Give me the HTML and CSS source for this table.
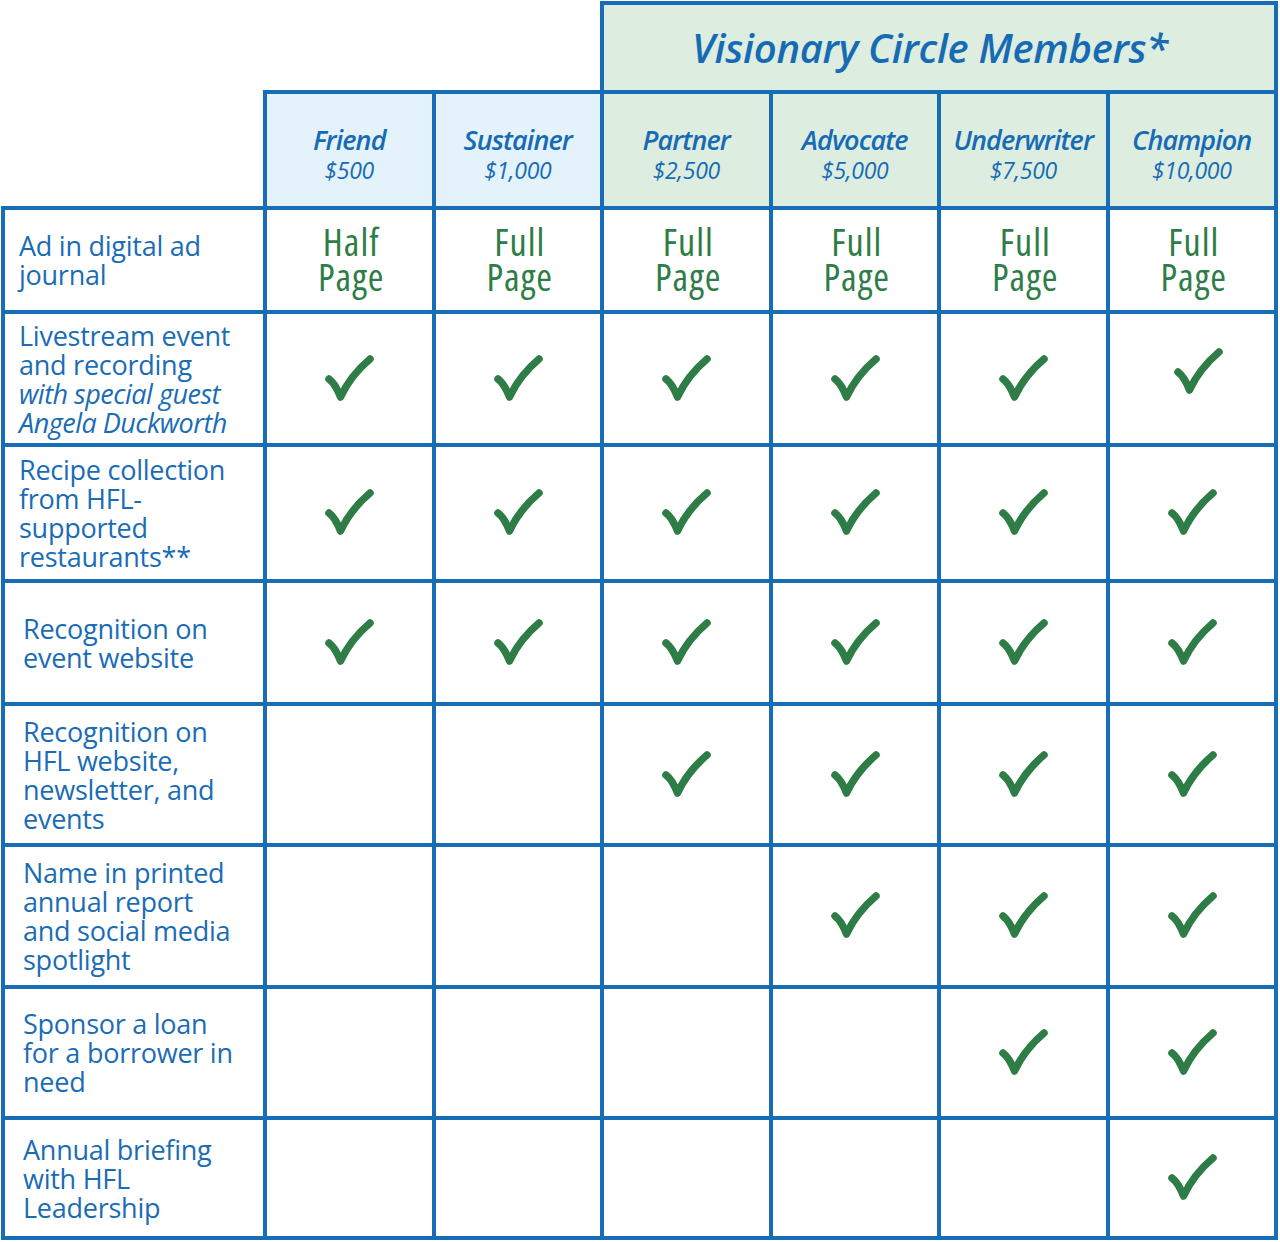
FILE: index.html
```html
<!DOCTYPE html>
<html lang="en">
<head>
<meta charset="utf-8">
<title>Visionary Circle Members</title>
<link rel="stylesheet" href="styles.css">
</head>
<body>
<div class="chart">
  <div class="blank blank-top"></div>
  <div class="blank blank-left"></div>
  <div class="vision">Visionary Circle Members*</div>

  <div class="tier tier-basic"><span class="tier-name">Friend</span><span class="tier-price">$500</span></div>
  <div class="tier tier-basic"><span class="tier-name">Sustainer</span><span class="tier-price">$1,000</span></div>
  <div class="tier tier-vc"><span class="tier-name">Partner</span><span class="tier-price">$2,500</span></div>
  <div class="tier tier-vc"><span class="tier-name">Advocate</span><span class="tier-price">$5,000</span></div>
  <div class="tier tier-vc"><span class="tier-name">Underwriter</span><span class="tier-price">$7,500</span></div>
  <div class="tier tier-vc"><span class="tier-name">Champion</span><span class="tier-price">$10,000</span></div>

  <!-- Row: ad journal -->
  <div class="label"><p>Ad in digital ad<br>journal</p></div>
  <div class="cell"><span class="hand">Half<br>Page</span></div>
  <div class="cell"><span class="hand">Full<br>Page</span></div>
  <div class="cell"><span class="hand">Full<br>Page</span></div>
  <div class="cell"><span class="hand">Full<br>Page</span></div>
  <div class="cell"><span class="hand">Full<br>Page</span></div>
  <div class="cell"><span class="hand">Full<br>Page</span></div>

  <!-- Row: livestream -->
  <div class="label"><p>Livestream event<br>and recording<br><em>with special guest<br>Angela Duckworth</em></p></div>
  <div class="cell"><svg class="check" viewBox="0 0 52 50"><path d="M6 25 C10 28 14 34 17.5 43 C24 29 34 16 47 5"/></svg></div>
  <div class="cell"><svg class="check" viewBox="0 0 52 50"><path d="M6 25 C10 28 14 34 17.5 43 C24 29 34 16 47 5"/></svg></div>
  <div class="cell"><svg class="check" viewBox="0 0 52 50"><path d="M6 25 C10 28 14 34 17.5 43 C24 29 34 16 47 5"/></svg></div>
  <div class="cell"><svg class="check" viewBox="0 0 52 50"><path d="M6 25 C10 28 14 34 17.5 43 C24 29 34 16 47 5"/></svg></div>
  <div class="cell"><svg class="check" viewBox="0 0 52 50"><path d="M6 25 C10 28 14 34 17.5 43 C24 29 34 16 47 5"/></svg></div>
  <div class="cell"><svg class="check check-high" viewBox="0 0 52 50"><path d="M6 25 C10 28 14 34 17.5 43 C24 29 34 16 47 5"/></svg></div>

  <!-- Row: recipe -->
  <div class="label"><p>Recipe collection<br>from HFL-<br>supported<br>restaurants**</p></div>
  <div class="cell"><svg class="check" viewBox="0 0 52 50"><path d="M6 25 C10 28 14 34 17.5 43 C24 29 34 16 47 5"/></svg></div>
  <div class="cell"><svg class="check" viewBox="0 0 52 50"><path d="M6 25 C10 28 14 34 17.5 43 C24 29 34 16 47 5"/></svg></div>
  <div class="cell"><svg class="check" viewBox="0 0 52 50"><path d="M6 25 C10 28 14 34 17.5 43 C24 29 34 16 47 5"/></svg></div>
  <div class="cell"><svg class="check" viewBox="0 0 52 50"><path d="M6 25 C10 28 14 34 17.5 43 C24 29 34 16 47 5"/></svg></div>
  <div class="cell"><svg class="check" viewBox="0 0 52 50"><path d="M6 25 C10 28 14 34 17.5 43 C24 29 34 16 47 5"/></svg></div>
  <div class="cell"><svg class="check" viewBox="0 0 52 50"><path d="M6 25 C10 28 14 34 17.5 43 C24 29 34 16 47 5"/></svg></div>

  <!-- Row: event website -->
  <div class="label label-in"><p>Recognition on<br>event website</p></div>
  <div class="cell"><svg class="check" viewBox="0 0 52 50"><path d="M6 25 C10 28 14 34 17.5 43 C24 29 34 16 47 5"/></svg></div>
  <div class="cell"><svg class="check" viewBox="0 0 52 50"><path d="M6 25 C10 28 14 34 17.5 43 C24 29 34 16 47 5"/></svg></div>
  <div class="cell"><svg class="check" viewBox="0 0 52 50"><path d="M6 25 C10 28 14 34 17.5 43 C24 29 34 16 47 5"/></svg></div>
  <div class="cell"><svg class="check" viewBox="0 0 52 50"><path d="M6 25 C10 28 14 34 17.5 43 C24 29 34 16 47 5"/></svg></div>
  <div class="cell"><svg class="check" viewBox="0 0 52 50"><path d="M6 25 C10 28 14 34 17.5 43 C24 29 34 16 47 5"/></svg></div>
  <div class="cell"><svg class="check" viewBox="0 0 52 50"><path d="M6 25 C10 28 14 34 17.5 43 C24 29 34 16 47 5"/></svg></div>

  <!-- Row: HFL website -->
  <div class="label label-in"><p>Recognition on<br>HFL website,<br>newsletter, and<br>events</p></div>
  <div class="cell"></div>
  <div class="cell"></div>
  <div class="cell"><svg class="check" viewBox="0 0 52 50"><path d="M6 25 C10 28 14 34 17.5 43 C24 29 34 16 47 5"/></svg></div>
  <div class="cell"><svg class="check" viewBox="0 0 52 50"><path d="M6 25 C10 28 14 34 17.5 43 C24 29 34 16 47 5"/></svg></div>
  <div class="cell"><svg class="check" viewBox="0 0 52 50"><path d="M6 25 C10 28 14 34 17.5 43 C24 29 34 16 47 5"/></svg></div>
  <div class="cell"><svg class="check" viewBox="0 0 52 50"><path d="M6 25 C10 28 14 34 17.5 43 C24 29 34 16 47 5"/></svg></div>

  <!-- Row: annual report -->
  <div class="label label-in"><p>Name in printed<br>annual report<br>and social media<br>spotlight</p></div>
  <div class="cell"></div>
  <div class="cell"></div>
  <div class="cell"></div>
  <div class="cell"><svg class="check" viewBox="0 0 52 50"><path d="M6 25 C10 28 14 34 17.5 43 C24 29 34 16 47 5"/></svg></div>
  <div class="cell"><svg class="check" viewBox="0 0 52 50"><path d="M6 25 C10 28 14 34 17.5 43 C24 29 34 16 47 5"/></svg></div>
  <div class="cell"><svg class="check" viewBox="0 0 52 50"><path d="M6 25 C10 28 14 34 17.5 43 C24 29 34 16 47 5"/></svg></div>

  <!-- Row: sponsor a loan -->
  <div class="label label-in"><p>Sponsor a loan<br>for a borrower in<br>need</p></div>
  <div class="cell"></div>
  <div class="cell"></div>
  <div class="cell"></div>
  <div class="cell"></div>
  <div class="cell"><svg class="check" viewBox="0 0 52 50"><path d="M6 25 C10 28 14 34 17.5 43 C24 29 34 16 47 5"/></svg></div>
  <div class="cell"><svg class="check" viewBox="0 0 52 50"><path d="M6 25 C10 28 14 34 17.5 43 C24 29 34 16 47 5"/></svg></div>

  <!-- Row: annual briefing -->
  <div class="label label-in"><p>Annual briefing<br>with HFL<br>Leadership</p></div>
  <div class="cell"></div>
  <div class="cell"></div>
  <div class="cell"></div>
  <div class="cell"></div>
  <div class="cell"></div>
  <div class="cell"><svg class="check" viewBox="0 0 52 50"><path d="M6 25 C10 28 14 34 17.5 43 C24 29 34 16 47 5"/></svg></div>
</div>
</body>
</html>
```

FILE: styles.css
```css
* { box-sizing: border-box; }

body {
  margin: 0;
  background: #ffffff;
  font-family: "Open Sans", "Noto Sans", sans-serif;
  color: #1a6cb5;
}

.chart {
  display: grid;
  grid-template-columns: 258px repeat(6, 164.5px);
  grid-template-rows: 85px 112px 100px 129px 132px 119px 137px 138px 127px 116px;
  gap: 4px;
  padding: 4px;
  margin: 1px 0 0 1px;
  width: max-content;
  background: #176db6;
}

.blank {
  background: #ffffff;
  margin: -4px 0 0 -4px;
}
.blank-top { grid-row: 1; grid-column: 1 / 4; }
.blank-left { grid-row: 1 / 3; grid-column: 1; }

.vision {
  grid-row: 1;
  grid-column: 4 / 8;
  background: #ddeee0;
  display: flex;
  align-items: center;
  justify-content: center;
  padding-right: 18px;
  font-size: 40px;
  font-weight: 600;
  font-style: italic;
  letter-spacing: -0.3px;
  color: #176bb5;
}

.tier {
  display: flex;
  flex-direction: column;
  align-items: center;
  justify-content: center;
  padding-top: 10px;
  font-style: italic;
  color: #176bb5;
}
.tier-basic { background: #e4f2fb; }
.tier-vc { background: #ddeee0; }

.tier-name {
  font-size: 27px;
  font-weight: 600;
  letter-spacing: -0.9px;
  line-height: 30px;
}
.tier-price {
  font-size: 23px;
  font-weight: 400;
  letter-spacing: -0.3px;
  line-height: 30px;
}

.label {
  background: #ffffff;
  display: flex;
  align-items: center;
  padding-left: 14px;
}
.label-in { padding-left: 18px; }
.label p {
  margin: 0;
  font-size: 27px;
  line-height: 29px;
  letter-spacing: -0.25px;
  color: #1a6cb5;
}
.label em {
  font-style: italic;
  letter-spacing: -0.5px;
}

.cell {
  background: #ffffff;
  display: flex;
  align-items: center;
  justify-content: center;
}

.hand {
  display: block;
  text-align: center;
  font-family: "Open Sans", "Noto Sans", sans-serif;
  font-stretch: 80%;
  font-size: 38px;
  font-weight: 500;
  line-height: 35px;
  letter-spacing: 1px;
  color: #2e7d46;
  padding-left: 4px;
  margin-top: -2px;
}

.check {
  width: 52px;
  height: 50px;
  fill: none;
  stroke: #2e7d46;
  stroke-width: 7.5;
  stroke-linecap: round;
  stroke-linejoin: round;
}
.check-high { margin: -14px 0 0 12px; }
```
